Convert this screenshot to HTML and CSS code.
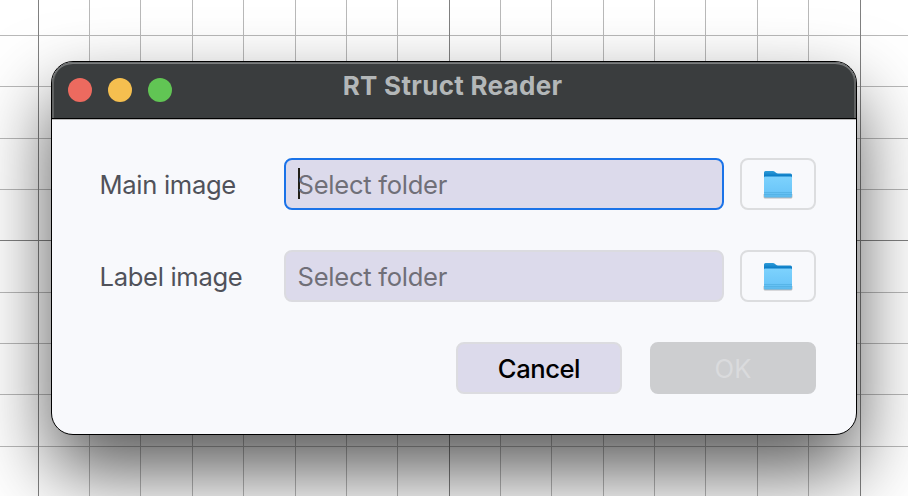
FILE: index.html
```html
<!DOCTYPE html>
<html lang="en">
<head>
<meta charset="utf-8">
<title>RT Struct Reader</title>
<link rel="stylesheet" href="styles.css">
</head>
<body>
<svg width="0" height="0" class="defs" aria-hidden="true">
  <defs>
    <linearGradient id="front" x1="0" y1="0" x2="0" y2="1">
      <stop offset="0" stop-color="#7dd2fd"/>
      <stop offset=".7" stop-color="#6dc7f9"/>
      <stop offset="1" stop-color="#5ab7ea"/>
    </linearGradient>
    <linearGradient id="back" x1="0" y1="0" x2="0" y2="1">
      <stop offset="0" stop-color="#2f9cd8"/>
      <stop offset=".6" stop-color="#0879c4"/>
    </linearGradient>
    <symbol id="folder" viewBox="0 0 32 32">
      <path d="M1.600 26h28.800v3q0 1.500-1.500 1.500H3.100q-1.500 0-1.500-1.500z" fill="#777" opacity=".5"/>
      <path d="M2 4.500Q2 3 3.500 3H11q1 0 1.800.8l1.200 1q.8.700 2 .7h12.500q1.500 0 1.500 1.500V12H2z" fill="url(#back)"/>
      <path d="M2 9.500Q2 8.500 3 8.500h26q1 0 1 1V28q0 1.500-1.500 1.500h-25Q2 29.500 2 28z" fill="url(#front)"/>
      <path d="M2 24.500h28M2 26.500h28" stroke="#4cabdf" stroke-width=".6"/>
    </symbol>
  </defs>
</svg>
<main class="desktop">
  <svg class="grid" width="908" height="496" shape-rendering="crispEdges" aria-hidden="true">
    <path class="minor" d="M89.500 0V496M140.500 0V496M192.500 0V496M243.500 0V496M295.500 0V496M346.500 0V496M397.500 0V496M500.500 0V496M551.500 0V496M603.500 0V496M654.500 0V496M705.500 0V496M757.500 0V496M808.500 0V496M0 35.500H908M0 86.500H908M0 138.500H908M0 189.500H908M0 292.500H908M0 343.500H908M0 394.500H908M0 446.500H908"/>
    <path class="major" d="M38.500 0V496M449.500 0V496M860.500 0V496M0 240.500H908"/>
  </svg>
  <section class="window">
    <header class="titlebar">
      <div class="lights">
        <span class="light close"></span>
        <span class="light minimize"></span>
        <span class="light maximize"></span>
      </div>
      <h1 class="title">RT Struct Reader</h1>
    </header>
    <form class="content">
      <div class="row">
        <span class="label">Main image</span>
        <div class="field focused"><span class="placeholder">Select folder</span></div>
        <button type="button" class="browse"><svg width="32" height="32"><use href="#folder"/></svg></button>
      </div>
      <div class="row">
        <span class="label">Label image</span>
        <div class="field"><span class="placeholder">Select folder</span></div>
        <button type="button" class="browse"><svg width="32" height="32"><use href="#folder"/></svg></button>
      </div>
      <div class="actions">
        <button type="button" class="button cancel"><span>Cancel</span></button>
        <button type="button" class="button ok" disabled><span>OK</span></button>
      </div>
    </form>
  </section>
</main>
</body>
</html>
```
FILE: styles.css
```css
* { box-sizing: border-box; }
body {
  margin: 0;
  font-family: Inter, "Liberation Sans", sans-serif;
  font-size: 25.6px;
}
.defs { position: absolute; }
.desktop {
  position: relative;
  width: 908px;
  height: 496px;
  padding: 61px 51px;
  overflow: hidden;
  background: #fff;
}
.grid { position: absolute; inset: 0; fill: none; }
.minor { stroke: #b9b9b9; }
.major { stroke: #808080; }
.window {
  position: relative;
  display: flex;
  flex-direction: column;
  width: 806px;
  height: 374px;
  border: 1px solid #000;
  border-radius: 22px;
  overflow: hidden;
  background: #f8f9fc;
  box-shadow: 0 36px 76px rgba(0, 0, 0, .66);
}
.titlebar {
  display: grid;
  grid-template-columns: 1fr auto 1fr;
  height: 58px;
  flex: none;
  padding: 0 16px;
  background: #3a3d3e;
  border-radius: 21px 21px 0 0;
  border-bottom: 1px solid #bbb;
  box-shadow: inset 0 -1px #000, inset 0 1px #686b6c, inset 0 2px #7b7d7e, inset 2px 0 #606262, inset -2px 0 #606262;
}
.lights { display: flex; gap: 16px; padding-top: 16px; }
.light { width: 24px; height: 24px; border-radius: 50%; }
.close { background: #ed6a5f; }
.minimize { background: #f5bf4f; }
.maximize { background: #61c554; }
.title {
  margin: 8px 3px 0 0;
  font-size: 26px;
  letter-spacing: .3px;
  line-height: 32px;
  font-weight: 700;
  color: #b3b7b8;
  white-space: nowrap;
}
.content { display: flex; flex-direction: column; gap: 40px; padding: 38px 40px 0 48px; }
.row { display: grid; grid-template-columns: 184px 440px 76px; height: 52px; align-items: center; }
.row .browse { margin-left: 16px; width: 76px; }
.label, .placeholder { padding-top: 2px; white-space: nowrap; font-weight: 430; }
.label { margin-left: -.5px; color: #50525a; letter-spacing: -.32px; }
.label, .placeholder, .button { line-height: 32px; }
.placeholder { margin-left: -.5px; letter-spacing: -.27px; }
.field {
  display: flex;
  align-items: center;
  height: 52px;
  padding-left: 12px;
  border: 2px solid #dbdbe0;
  border-radius: 8px;
  background: #dcdaeb;
  color: #706f78;
}
.focused { border-color: #1b73e8; }
.focused::before { content: ""; width: 2px; height: 31px; margin: -2px -2px 0 0; background: #222018; }
.browse {
  display: grid;
  place-items: center;
  height: 52px;
  padding: 0;
  border: 2px solid #dcdddf;
  border-radius: 8px;
  background: #f8f9fc;
}
.actions { display: flex; justify-content: flex-end; gap: 28px; }
.button {
  width: 166px;
  height: 52px;
  padding: 2px 0 0;
  border: 2px solid #dcdce0;
  border-radius: 8px;
  font-family: inherit;
  font-size: inherit;
}
.cancel { background: #dcdaeb; color: #000; font-weight: 500; letter-spacing: -.45px; }
.ok { border-color: #cdced0; background: #cdced0; color: #dadbdd; }
```
